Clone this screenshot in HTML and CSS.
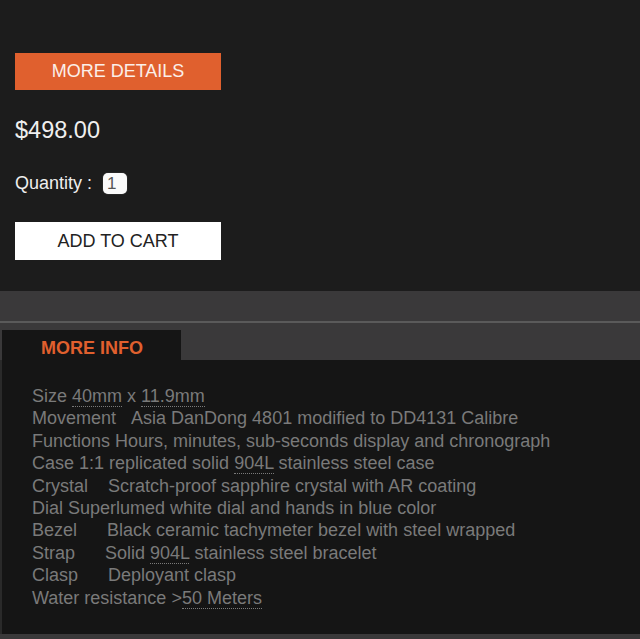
FILE: index.html
```html
<!DOCTYPE html>
<html>
<head>
<meta charset="utf-8">
<link rel="stylesheet" href="styles.css">
</head>
<body>
<div class="product">
  <a class="btn btn-details">MORE DETAILS</a>
  <div class="price">$498.00</div>
  <div class="qty">
    <span class="qty-label">Quantity :</span>
    <span class="qty-input">1</span>
  </div>
  <a class="btn btn-cart">ADD TO CART</a>
</div>
<div class="band"></div>
<div class="tabs">
  <div class="tab">MORE INFO</div>
</div>
<div class="panel">
  <div class="line">Size <abbr>40mm</abbr> x <abbr>11.9mm</abbr></div>
  <div class="line">Movement&nbsp;&nbsp;&nbsp;Asia DanDong 4801 modified to DD4131 Calibre</div>
  <div class="line">Functions Hours, minutes, sub-seconds display and chronograph</div>
  <div class="line">Case 1:1 replicated solid <abbr>904L</abbr> stainless steel case</div>
  <div class="line">Crystal&nbsp;&nbsp;&nbsp;&nbsp;Scratch-proof sapphire crystal with AR coating</div>
  <div class="line">Dial Superlumed white dial and hands in blue color</div>
  <div class="line">Bezel&nbsp;&nbsp;&nbsp;&nbsp;&nbsp;&nbsp;Black ceramic tachymeter bezel with steel wrapped</div>
  <div class="line">Strap&nbsp;&nbsp;&nbsp;&nbsp;&nbsp;&nbsp;Solid <abbr>904L</abbr> stainless steel bracelet</div>
  <div class="line">Clasp&nbsp;&nbsp;&nbsp;&nbsp;&nbsp;&nbsp;Deployant clasp</div>
  <div class="line">Water resistance &gt;<abbr>50 Meters</abbr></div>
</div>
<div class="footer-band"></div>
</body>
</html>
```
FILE: styles.css
```css
html, body {
  margin: 0;
  padding: 0;
  background: #1c1c1c;
  font-family: "Liberation Sans", Arial, sans-serif;
  height: 639px;
  overflow: hidden;
}
.product {
  padding: 53px 15px 0;
  height: 291px;
  box-sizing: border-box;
}
.btn {
  display: block;
  width: 206px;
  height: 37px;
  line-height: 37px;
  text-align: center;
  font-size: 18px;
}
.btn-details {
  background: #e0602e;
  color: #fbefe9;
}
.price {
  color: #efefef;
  font-size: 23.5px;
  margin-top: 27px;
  line-height: 26px;
}
.qty {
  display: flex;
  align-items: center;
  margin-top: 29px;
  color: #eeeeee;
  font-size: 18px;
  height: 22px;
}
.qty-label {
  margin-right: 11px;
}
.qty-input {
  display: inline-block;
  width: 24px;
  height: 21px;
  box-sizing: border-box;
  background: #fafafa;
  border-radius: 5px;
  color: #555;
  font-size: 17px;
  line-height: 21px;
  padding-left: 4px;
  box-shadow: 0 0 1px #888;
}
.btn-cart {
  margin-top: 28px;
  background: #ffffff;
  color: #222;
  height: 38px;
  line-height: 38px;
}
.band {
  height: 30px;
  background: #3a393a;
  border-bottom: 2px solid #5a5a5a;
}
.tabs {
  background: #3a393a;
  padding-top: 7px;
  height: 30px;
}
.tab {
  width: 179px;
  height: 30px;
  margin-left: 2px;
  background: #151515;
  color: #e0602e;
  font-weight: bold;
  font-size: 18px;
  line-height: 36px;
  padding-left: 39px;
  box-sizing: border-box;
}
.panel {
  background: #151515;
  border-left: 2px solid #2a2a2a;
  height: 274px;
  box-sizing: border-box;
  padding: 25px 0 0 30px;
  color: #7a7a7a;
  font-size: 18px;
  line-height: 22.4px;
}
.line {
  white-space: nowrap;
}
abbr {
  text-decoration: none;
  border-bottom: 1px dotted #7a7a7a;
}
.footer-band {
  height: 5px;
  background: #3a393a;
}
```
